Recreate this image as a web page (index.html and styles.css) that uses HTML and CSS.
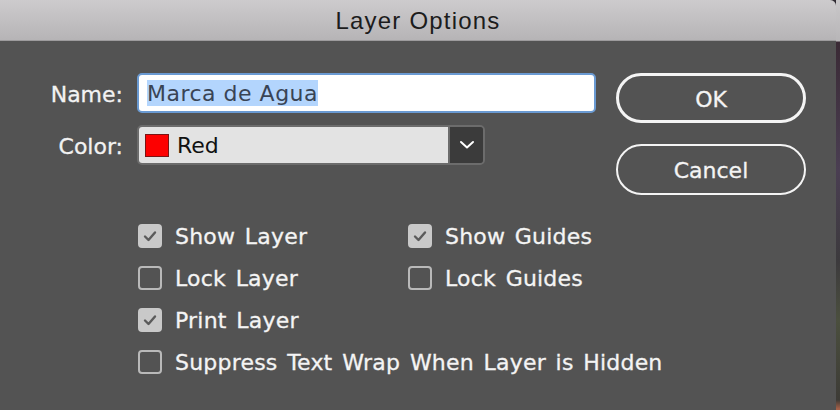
FILE: index.html
```html
<!DOCTYPE html>
<html>
<head>
<meta charset="utf-8">
<link rel="stylesheet" href="styles.css">
</head>
<body>
<div class="screen">
  <div class="dialog">
    <div class="titlebar">Layer Options</div>
    <div class="content">
      <div class="top">
        <div class="form">
          <label class="label">Name:</label>
          <div class="textfield"><span class="sel">Marca de Agua</span></div>
          <label class="label">Color:</label>
          <div class="select">
            <div class="select-value"><span class="swatch"></span><span>Red</span></div>
            <div class="select-arrow">
              <svg width="16" height="10" viewBox="0 0 16 10"><path d="M2 2 L8 7.5 L14 2" fill="none" stroke="#fff" stroke-width="2" stroke-linecap="round" stroke-linejoin="round"/></svg>
            </div>
          </div>
        </div>
        <div class="buttons">
          <div class="btn btn-default">OK</div>
          <div class="btn">Cancel</div>
        </div>
      </div>
      <div class="checks">
        <div class="check"><span class="box on"><svg width="24" height="24" viewBox="0 0 24 24"><path d="M7 12.5 L10.5 16 L17 8.5" fill="none" stroke="#5b5b5b" stroke-width="2.4" stroke-linecap="round" stroke-linejoin="round"/></svg></span>Show Layer</div>
        <div class="check"><span class="box on"><svg width="24" height="24" viewBox="0 0 24 24"><path d="M7 12.5 L10.5 16 L17 8.5" fill="none" stroke="#5b5b5b" stroke-width="2.4" stroke-linecap="round" stroke-linejoin="round"/></svg></span>Show Guides</div>
        <div class="check"><span class="box"></span>Lock Layer</div>
        <div class="check"><span class="box"></span>Lock Guides</div>
        <div class="check wide"><span class="box on"><svg width="24" height="24" viewBox="0 0 24 24"><path d="M7 12.5 L10.5 16 L17 8.5" fill="none" stroke="#5b5b5b" stroke-width="2.4" stroke-linecap="round" stroke-linejoin="round"/></svg></span>Print Layer</div>
        <div class="check wide"><span class="box"></span>Suppress Text Wrap When Layer is Hidden</div>
      </div>
    </div>
  </div>
  <div class="backdrop"></div>
</div>
</body>
</html>
```
FILE: styles.css
```css
* { box-sizing: border-box; }
html, body { margin: 0; padding: 0; }
body {
  width: 840px;
  height: 410px;
  overflow: hidden;
  background: #2f2a33;
  font-family: "DejaVu Sans", Verdana, sans-serif;
}
.screen {
  display: flex;
  width: 840px;
  height: 410px;
}
.dialog {
  width: 836px;
  height: 410px;
  background: #535353;
  display: flex;
  flex-direction: column;
  border-top-right-radius: 6px;
  overflow: hidden;
}
.backdrop {
  flex: 1;
  background: linear-gradient(#c9c7c9 0, #b8b6b8 41px, #3a2a35 42px, #4a3e52 170px, #3c3a3d 260px, #4b4f3e 320px, #3d3b36 400px, #a66048 409px);
}
.titlebar {
  height: 41px;
  flex: none;
  background: linear-gradient(#cdcbcd, #b6b4b6);
  border-bottom: 1px solid #9d9b9d;
  display: flex;
  align-items: center;
  justify-content: center;
  font-family: "Liberation Sans", Arial, sans-serif;
  font-size: 24px;
  letter-spacing: 1.2px;
  color: #1c1c1c;
  padding-top: 1px;
}
.content {
  padding-top: 32px;
  display: flex;
  flex-direction: column;
}
.top {
  display: flex;
  align-items: flex-start;
  height: 122px;
}
.form {
  display: grid;
  grid-template-columns: 123px 459px;
  grid-auto-rows: 40px;
  column-gap: 14px;
  row-gap: 12px;
  align-items: center;
}
.label {
  text-align: right;
  color: #f2f2f2;
  font-size: 22px;
  line-height: 40px;
  height: 40px;
  padding-top: 2px;
  -webkit-text-stroke: 0.3px #f2f2f2;
}
.textfield {
  height: 40px;
  background: #fff;
  border: 2px solid #6a9ad2;
  border-radius: 5px;
  padding-left: 8px;
  display: flex;
  align-items: center;
  font-size: 22px;
  letter-spacing: 0.5px;
  color: #394455;
}
.sel {
  background: #b3d5fd;
  line-height: 24px;
  padding-top: 2px;
}
.select {
  width: 348px;
  height: 40px;
  display: flex;
  border: 2px solid #6c6c6c;
  border-radius: 5px;
  overflow: hidden;
}
.select-value {
  flex: 1;
  background: #e3e3e3;
  display: flex;
  align-items: center;
  padding-left: 6px;
  gap: 8px;
  font-size: 22px;
  color: #111;
}
.swatch {
  width: 24px;
  height: 23px;
  background: #fd0000;
  border: 1px solid #7a1414;
}
.select-arrow {
  width: 35px;
  background: #3b3b3b;
  border-left: 2px solid #6c6c6c;
  display: flex;
  align-items: center;
  justify-content: center;
}
.buttons {
  margin-left: 20px;
  display: flex;
  flex-direction: column;
  gap: 21px;
}
.btn {
  width: 190px;
  height: 51px;
  border: 2px solid #f4f4f4;
  border-radius: 26px;
  display: flex;
  align-items: center;
  justify-content: center;
  color: #f4f4f4;
  font-size: 22px;
  padding-top: 2px;
  -webkit-text-stroke: 0.3px #f4f4f4;
}
.btn-default {
  height: 50px;
  border-width: 3px;
}
.checks {
  margin-top: 20px;
  padding-left: 138px;
  display: grid;
  grid-template-columns: 270px auto;
  grid-auto-rows: 42px;
}
.check {
  display: flex;
  align-items: center;
  gap: 13px;
  color: #f4f4f4;
  font-size: 22px;
  letter-spacing: 0.2px;
  word-spacing: 2.5px;
  white-space: nowrap;
  -webkit-text-stroke: 0.3px #f4f4f4;
}
.check.wide { grid-column: 1 / span 2; }
.box {
  width: 24px;
  height: 24px;
  flex: none;
  border: 2px solid #b9b9b9;
  border-radius: 4px;
  position: relative;
}
.box.on {
  background: #c9c9c9;
  border-color: #c9c9c9;
}
.box svg {
  position: absolute;
  left: -2px;
  top: -2px;
}
```
